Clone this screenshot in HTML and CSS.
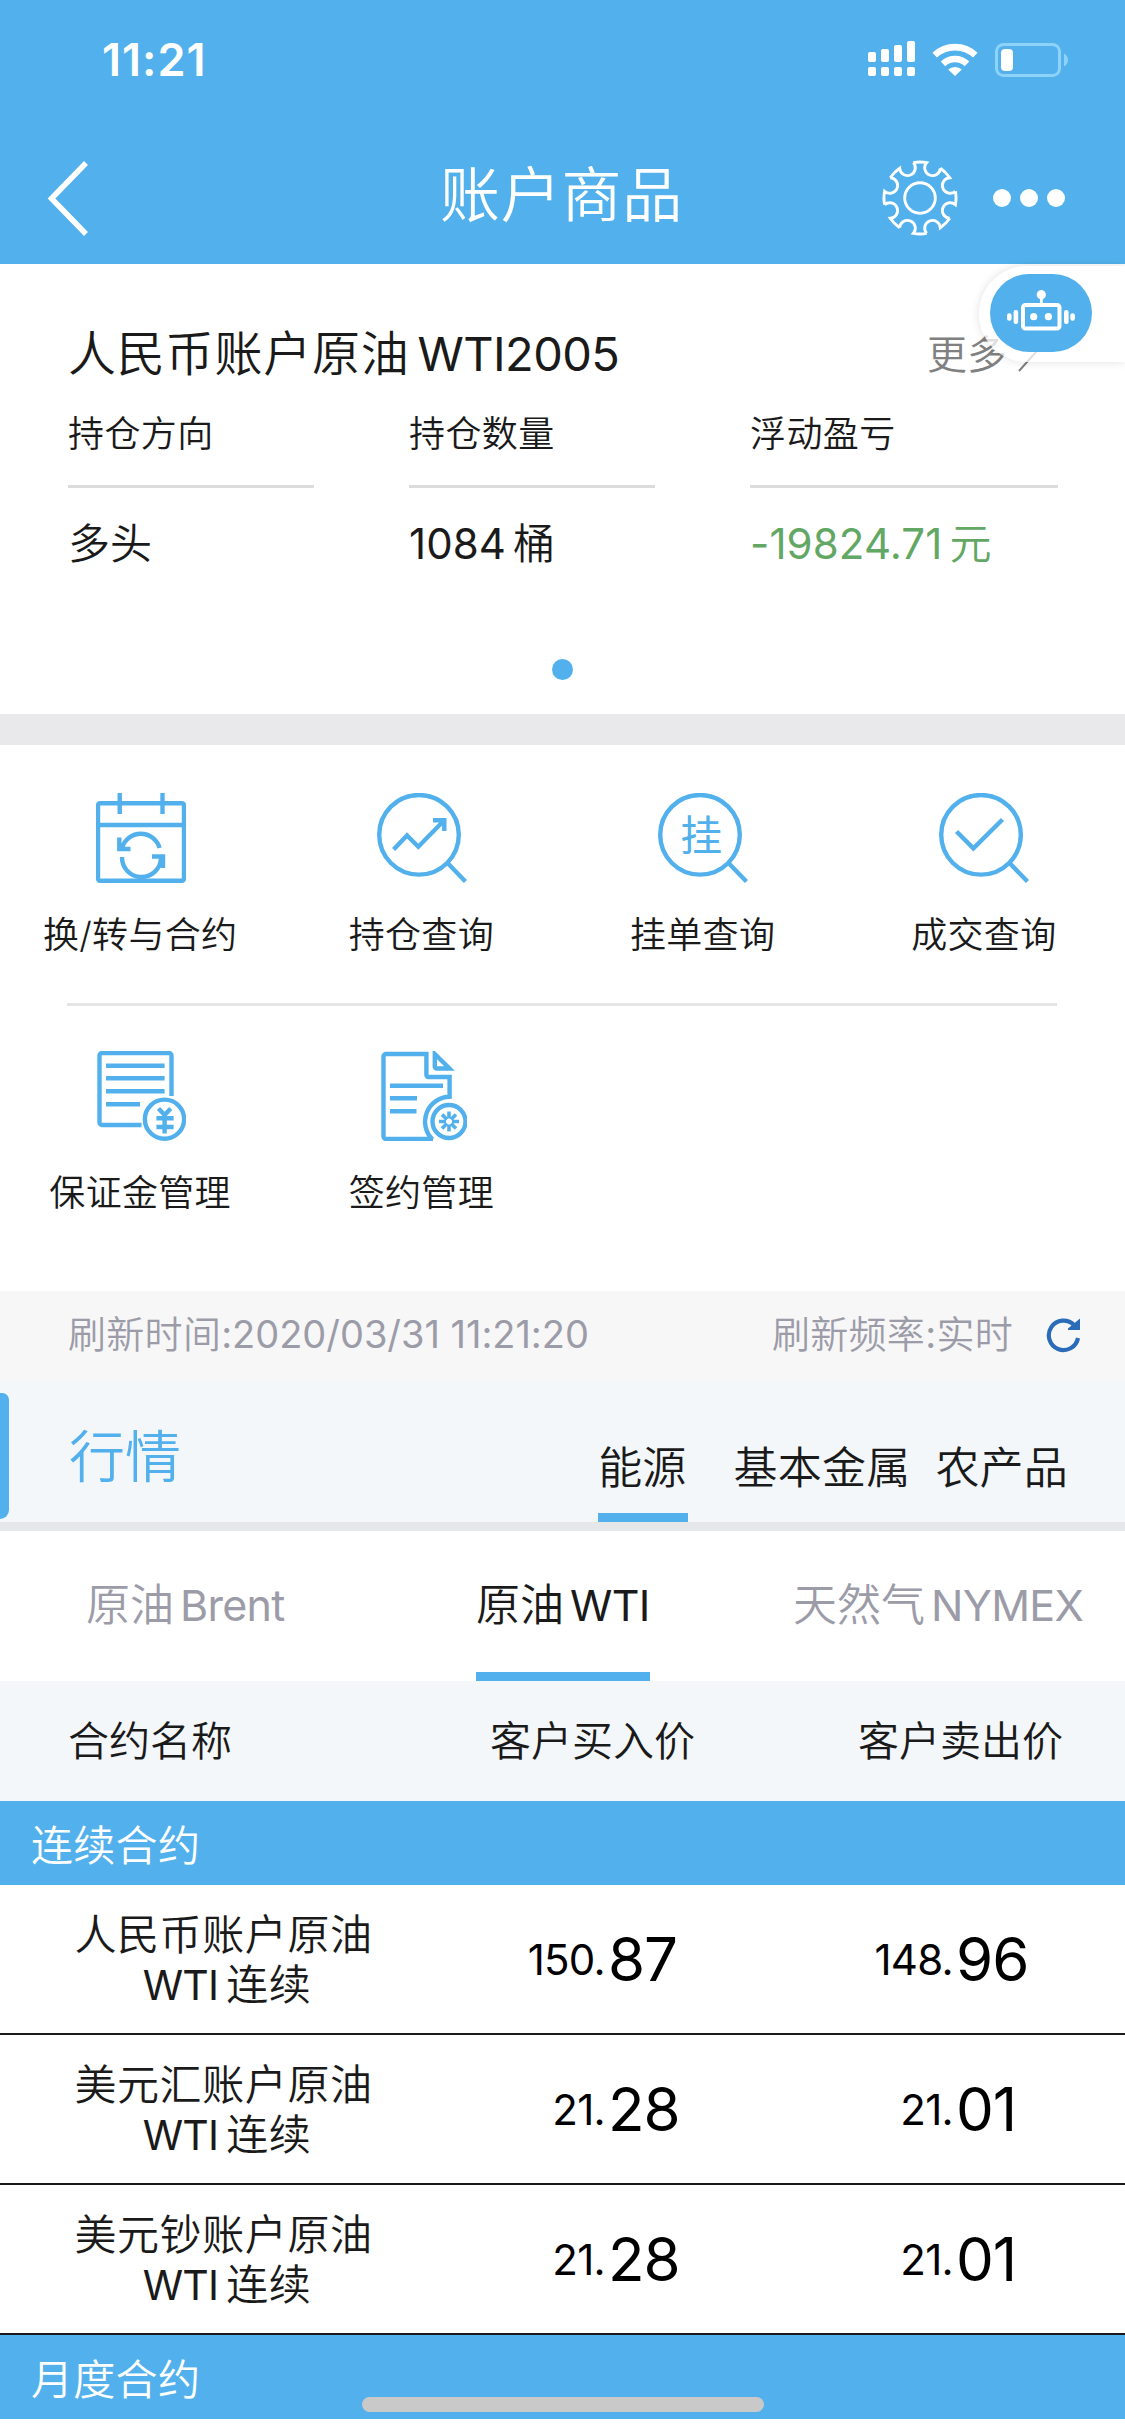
FILE: index.html
```html
<!DOCTYPE html>
<html lang="zh-CN">
<head>
<meta charset="utf-8">
<title>账户商品</title>
<link rel="stylesheet" href="styles.css">
</head>
<body>
<header class="header">
  <div class="status">
    <span class="time">11:21</span>
    <svg class="status-icons" width="204" height="40" viewBox="866 40 204 40">
      <g fill="#fff">
        <rect x="868" y="52" width="8" height="10" rx="2"/><rect x="881" y="49" width="8" height="13" rx="2"/><rect x="894" y="45" width="8" height="17" rx="2"/><rect x="907" y="41" width="8" height="21" rx="2"/>
        <rect x="868" y="67" width="8" height="9" rx="2"/><rect x="881" y="67" width="8" height="9" rx="2"/><rect x="894" y="67" width="8" height="9" rx="2"/><rect x="907" y="67" width="8" height="9" rx="2"/>
        <path d="M955 76l-6.800-6.600a10.500 10.500 0 0 1 13.600 0z"/>
        <rect x="1001" y="49" width="12" height="22" rx="4"/>
      </g>
      <g fill="none" stroke="#fff" stroke-width="6.600">
        <path d="M934.700 55.200a29.500 29.500 0 0 1 40.600 0"/>
        <path d="M943 63.800a17.600 17.600 0 0 1 24 0"/>
      </g>
      <rect x="996.500" y="44.500" width="63" height="31" rx="7" fill="none" stroke="#8dd2f7" stroke-width="3"/>
      <path d="M1064 53.500q4 2.500 4 6.500t-4 6.500z" fill="#8dd2f7"/>
    </svg>
  </div>
  <div class="navbar">
    <svg class="back" width="44" height="76" viewBox="0 0 44 76"><path d="M41 3L6.500 38.500 41 74" fill="none" stroke="#fff" stroke-width="5.500"/></svg>
    <h1>账户商品</h1>
    <div class="nav-actions">
      <svg width="76" height="76" viewBox="-38 -38 76 76" fill="none" stroke="#fff" stroke-width="2.900" stroke-linejoin="miter">
        <circle r="15.300"/>
        <g id="q"><path id="t" d="M-6.700-35.400A36 36 0 0 1 6.700-35.400A7.800 7.800 0 1 0 20.300-29.700"/><use href="#t" transform="rotate(45)"/></g>
        <use href="#q" transform="rotate(90)"/><use href="#q" transform="rotate(180)"/><use href="#q" transform="rotate(270)"/>
      </svg>
      <div class="dots"><i></i><i></i><i></i></div>
    </div>
  </div>
</header>

<section class="position">
  <div class="position-head">
    <h2>人民币账户原油<span class="latin">WTI2005</span></h2>
    <a class="more">更多<svg width="20" height="42" viewBox="0 0 20 42"><path d="M1 2l17 19L1 40" fill="none" stroke="#808080" stroke-width="2"/></svg></a>
  </div>
  <div class="position-cols">
    <div class="pcol"><div class="plabel">持仓方向</div><div class="pvalue">多头</div></div>
    <div class="pcol"><div class="plabel">持仓数量</div><div class="pvalue"><span class="num">1084</span>桶</div></div>
    <div class="pcol wide"><div class="plabel">浮动盈亏</div><div class="pvalue loss"><span class="num">-19824.71</span>元</div></div>
  </div>
  <div class="pager"><i></i></div>
  <div class="robot">
    <div class="robot-pill">
      <svg width="70" height="46" viewBox="1006 288 70 46" fill="#fff">
        <rect x="1023" y="305" width="36.500" height="23.500" rx="2.500" fill="none" stroke="#fff" stroke-width="4"/>
        <circle cx="1041.300" cy="294.700" r="4.600"/><path d="M1040 297h2.800v7h-2.800z"/>
        <circle cx="1033.700" cy="316.700" r="3.600"/><circle cx="1048.400" cy="316.700" r="3.600"/>
        <rect x="1013.600" y="310" width="4.600" height="14" rx="2.200"/><rect x="1064" y="310" width="4.600" height="14" rx="2.200"/>
        <rect x="1007" y="313.300" width="4.600" height="7.400" rx="2.200"/><rect x="1070.300" y="313.300" width="4.600" height="7.400" rx="2.200"/>
      </svg>
    </div>
  </div>
</section>

<section class="menu">
  <div class="menu-row">
    <a class="item">
      <svg class="ico" viewBox="0 0 90 90"><rect x="2" y="10.200" width="86" height="77.600" rx="2"/><path d="M23.700 0v21M66.500 0v21M2 32h86"/><path d="M26 55A19.500 19.500 0 0 1 63.600 55M23.300 44.500V56H34.500M26 64A19.500 19.500 0 0 0 65 65M56 63.500H67V75"/></svg>
      <span>换/转与合约</span>
    </a>
    <a class="item">
      <svg class="ico" viewBox="0 0 90 90"><circle cx="42" cy="41.800" r="39.800"/><path d="M70 69.500L88.500 88.500M16.600 56.500L30 42.500 41.300 53.700 67 27.500M56 27.200H67.300V38"/></svg>
      <span>持仓查询</span>
    </a>
    <a class="item">
      <svg class="ico" viewBox="0 0 90 90"><circle cx="42" cy="41.800" r="39.800"/><path d="M70 69.500L88.500 88.500"/><text x="43.500" y="58" text-anchor="middle">挂</text></svg>
      <span>挂单查询</span>
    </a>
    <a class="item">
      <svg class="ico" viewBox="0 0 90 90"><circle cx="42" cy="41.800" r="39.800"/><path d="M70 69.500L88.500 88.500M17.500 38.500L34.400 55.300 63.500 26.500"/></svg>
      <span>成交查询</span>
    </a>
  </div>
  <div class="menu-row second">
    <a class="item">
      <svg class="ico" viewBox="0 0 90 90"><path d="M75.500 45V4.500a2.500 2.500 0 0 0-2.500-2.500H6A2.500 2.500 0 0 0 3.500 4.500V71.500A2.500 2.500 0 0 0 6 74H45.500"/><path d="M10 14.700H68.600M10 27.300H68.600M10 40.300H68.600M10 53.300H44"/><circle cx="68.500" cy="68.200" r="19.600"/><path d="M62.500 57.500l6.100 6.500 6.100-6.500M60.400 67.300h17.200M60.400 76h17.200M68.600 64V82.500"/></svg>
      <span>保证金管理</span>
    </a>
    <a class="item">
      <svg class="ico" viewBox="0 0 90 90"><path d="M56 88H9A2.500 2.500 0 0 1 6.500 85.500V5.500A2.500 2.500 0 0 1 9 3H49.400V24a2 2 0 0 0 2 2H72.600V45.700A25 25 0 0 0 55.500 88.500"/><path d="M57.800 3V15.500a2 2 0 0 0 2 2H72.500Z"/><path d="M13 34.700H66M13 47.300H40M13 60.300H39.500"/><circle cx="72" cy="70.500" r="16.500"/><path d="M72 60.500v7M72 73.500v7M62 70.500h7M75 70.500h7M65 63.500l5 5M74 72.500l5 5M79 63.500l-5 5M70 72.500l-5 5" stroke-width="3.600"/></svg>
      <span>签约管理</span>
    </a>
  </div>
</section>

<div class="refresh">
  <span class="stamp">刷新时间<span class="n">:2020/03/31 11:21:20</span></span>
  <span class="rate">刷新频率<span class="n">:</span>实时</span>
  <svg width="36" height="36" viewBox="0 0 36 36"><path d="M33 20A14.700 14.700 0 1 1 29 7" fill="none" stroke="#2b6cb8" stroke-width="4.200"/><path d="M35 .5V12H23v-1.500z" fill="#2b6cb8"/></svg>
</div>

<div class="market">
  <i class="mark"></i>
  <h3>行情</h3>
  <nav class="cats"><a class="on">能源</a><a>基本金属</a><a>农产品</a></nav>
</div>

<nav class="subtabs">
  <a class="s1">原油<span class="latin">Brent</span></a>
  <a class="s2 on">原油<span class="latin">WTI</span></a>
  <a class="s3">天然气<span class="latin">NYMEX</span></a>
</nav>

<div class="thead"><span>合约名称</span><span>客户买入价</span><span>客户卖出价</span></div>
<div class="group">连续合约</div>
<div class="row"><div class="name">人民币账户原油<br><span class="latin">WTI</span>连续</div><div class="price"><small>150.</small><b>87</b></div><div class="price"><small>148.</small><b>96</b></div></div>
<div class="row"><div class="name">美元汇账户原油<br><span class="latin">WTI</span>连续</div><div class="price"><small>21.</small><b>28</b></div><div class="price"><small>21.</small><b>01</b></div></div>
<div class="row"><div class="name">美元钞账户原油<br><span class="latin">WTI</span>连续</div><div class="price"><small>21.</small><b>28</b></div><div class="price"><small>21.</small><b>01</b></div></div>
<div class="group last">月度合约<i class="home"></i></div>
</body>
</html>
```
FILE: styles.css
```css
* { box-sizing: border-box; margin: 0; padding: 0; }
body {
  width: 1125px; height: 2436px; overflow: hidden; background: #fff; color: #1a1a1a;
  font-family: "Inter", "Noto Sans CJK SC", sans-serif; font-weight: 350;
}
h1, h2, h3 { font-weight: 350; }
b, small, .latin, .num, .n { font-weight: 400; }
svg, i { display: block; flex: none; }
span, a { white-space: nowrap; }

.header { height: 264px; background: #52b1ec; color: #fff; }
.status { height: 132px; padding: 40px 55px 0 102px; display: flex; justify-content: space-between; align-items: flex-start; }
.time { font-size: 45px; line-height: 40px; font-weight: 600; letter-spacing: 1px; }
.navbar { height: 132px; display: grid; grid-template-columns: 440px 1fr 440px; align-items: center; padding: 0 0 1px; }
.back { margin-left: 45px; }
.navbar h1 { font-size: 60px; line-height: 80px; text-align: center; letter-spacing: 0.8px; margin: -5px 0 0 -2px; }
.nav-actions { display: flex; align-items: center; gap: 35px; padding-left: 197px; }
.dots { display: flex; gap: 9px; }
.dots i { width: 18px; height: 18px; border-radius: 50%; background: #fff; }

.position { position: relative; height: 481px; padding: 54px 67px 0 68px; border-bottom: 31px solid #e9e9eb; }
.position-head { display: flex; height: 72px; justify-content: space-between; align-items: center; }
.position-head h2 { font-size: 48px; line-height: 70px; letter-spacing: 0.8px; }
.position-head .latin { margin-left: 8px; font-size: 47px; letter-spacing: -0.6px; }
.more { display: flex; align-items: center; gap: 11px; font-size: 40px; color: #808080; margin: -5px 20px 0 0; }
.position-cols { display: grid; grid-template-columns: 246px 246px 308px; column-gap: 95px; margin-top: 20px; }
.plabel { height: 78px; font-size: 36px; line-height: 48px; border-bottom: 3px solid #dcdcdc; letter-spacing: 0.4px; }
.pvalue { font-size: 42px; line-height: 60px; margin-top: 26px; white-space: nowrap; }
.num { margin-right: 7px; letter-spacing: 0.1px; }
.loss { color: #62a864; }
.pager { display: flex; justify-content: center; margin: 85px 1px 0 0; }
.pager i { width: 21px; height: 21px; border-radius: 50%; background: #52b1ec; }
.robot { position: absolute; right: 0; top: 2px; width: 146px; height: 96px; border-radius: 48px 0 0 48px; background: rgba(255,255,255,.75); box-shadow: 0 0 10px rgba(0,0,0,.12); padding: 8px 0 0 11px; }
.robot-pill { width: 102px; height: 78px; border-radius: 39px; background: #52b1ec; padding: 14px 0 0 16px; }

.menu { height: 546px; }
.menu-row { display: grid; grid-template-columns: repeat(4, 1fr); padding-top: 48px; height: 258px; position: relative; }
.menu-row::after { content: ""; position: absolute; left: 67px; right: 68px; bottom: 0; height: 3px; background: #e5e5e5; }
.menu-row.second { padding-top: 45px; margin-top: 3px; }
.menu-row:first-child { height: 261px; margin-bottom: -3px; }
.menu-row.second::after { display: none; }
.item { display: flex; flex-direction: column; align-items: center; gap: 27px; font-size: 36px; line-height: 50px; letter-spacing: 0.3px; }
.item span { margin-right: 1px; }
.ico { width: 90px; height: 90px; fill: none; stroke: #52b1ec; stroke-width: 4.4; }
.ico text { font-size: 42px; font-family: "Noto Sans CJK SC", sans-serif; font-weight: 400; fill: #52b1ec; stroke: none; }

.refresh { height: 90px; background: #f7f7f7; color: #9c9ca9; font-size: 38px; line-height: 87px; display: flex; align-items: flex-start; padding: 0 44px 0 68px; letter-spacing: 0.3px; }
.stamp .n { letter-spacing: -0.03px; }
.rate { margin-left: auto; margin-right: 32px; }
.refresh svg { margin-top: 27px; }

.market { height: 150px; background: #f3f7fa; border-bottom: 9px solid #e6e7e9; display: flex; position: relative; }
.mark { position: absolute; left: 0; top: 12px; width: 9px; height: 126px; border-radius: 0 9px 12px 0; background: #52b1ec; }
.market h3 { color: #52b1ec; font-size: 56px; line-height: 80px; margin: 36px 0 0 69px; }
.cats { margin-left: auto; display: flex; align-items: flex-start; padding-right: 57px; font-size: 44px; line-height: 60px; }
.cats a { height: 141px; padding-top: 57px; letter-spacing: 0.2px; }
.cats a + a { margin-left: 46px; }
.cats a + a + a { margin-left: 25px; }
.cats .on { border-bottom: 9px solid #52b1ec; padding-right: 1px; }

.subtabs { height: 150px; display: grid; grid-template-columns: 390px 317px 1fr; justify-items: start; padding: 0 0 0 86px; font-size: 44px; line-height: 60px; color: #9c9ca9; }
.subtabs a { height: 150px; padding-top: 44px; }
.subtabs .latin { margin-left: 6px; font-size: 43px; letter-spacing: -0.7px; }
.subtabs .on { width: 174px; color: #1a1a1a; border-bottom: 9px solid #52b1ec; }

.thead { height: 120px; background: #f3f7fa; display: grid; grid-template-columns: 422px 368px 1fr; padding-left: 68px; font-size: 41px; line-height: 120px; }
.group { height: 84px; background: #52b1ec; color: #fff; font-size: 42px; line-height: 90px; padding-left: 31px; letter-spacing: 0.3px; }
.row { height: 150px; border-bottom: 2px solid #1a1a1a; display: grid; grid-template-columns: 435px 348px 1fr; }
.name { font-size: 42px; line-height: 50px; padding: 25px 0 0 12px; text-align: center; letter-spacing: 0.6px; }
.name .latin { margin: 0 8px 0 7px; font-size: 41px; letter-spacing: -0.8px; }
.price { display: grid; grid-template-columns: 170px 1fr; column-gap: 3px; color: #000; }
.price small { font-size: 42px; line-height: 60px; text-align: right; padding-top: 45px; letter-spacing: -0.7px; }
.price b { font-size: 60px; line-height: 60px; padding-top: 44px; letter-spacing: -1px; }
.last { position: relative; }
.home { position: absolute; left: 362px; top: 62px; width: 402px; height: 15px; border-radius: 8px; background: #c9c9c9; }
```
